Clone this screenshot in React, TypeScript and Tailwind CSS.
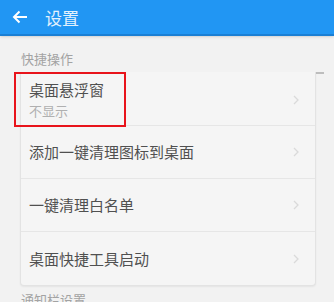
import React from 'react'

const rows = [
  { title: '添加一键清理图标到桌面' },
  { title: '一键清理白名单' },
  { title: '桌面快捷工具启动' },
]

function Chevron() {
  return (
    <svg width="6" height="10" viewBox="0 0 6 10" className="shrink-0">
      <path d="M1 1l4 4-4 4" fill="none" stroke="#dadada" strokeWidth="1.3" />
    </svg>
  )
}

export default function App() {
  return (
    <div
      className="w-[334px] h-[302px] overflow-hidden bg-[#f2f2f2]"
      style={{ fontFamily: '"Noto Sans CJK SC", "Noto Sans", sans-serif' }}
    >
      {/* app bar */}
      <div className="h-[36px] bg-[#2196f3] border-b-2 border-[#1a7fd4] flex items-center shadow-sm">
        <svg width="16" height="14" viewBox="0 0 16 14" className="ml-[12px]">
          <path d="M15 7H2.5M7.5 1.5L2 7l5.5 5.5" fill="none" stroke="#fff" strokeWidth="2" />
        </svg>
        <span className="ml-[17px] text-[17px] leading-none text-[#e3f1fd]">设置</span>
      </div>

      <div className="pl-[21px] pt-[14px] text-[13px] leading-[18px] text-[#a3a3a3]">快捷操作</div>

      <div className="relative ml-[20px] mt-[4px]">
        <div className="h-[2px] w-[304px] bg-[#bdbdbd]" />
        <div className="w-[296px] -mt-[2px] bg-[#f5f5f5] border border-t-0 border-[#e3e3e3] rounded-b-[4px] shadow-[0_1px_2px_rgba(0,0,0,0.06)]">
          <div className="h-[54px] flex items-center justify-between pl-[8px] pr-[16px] border-b border-[#e6e6e6] pt-[2px]">
            <div className="flex flex-col">
              <span className="text-[15px] leading-[20px] text-[#505050]">桌面悬浮窗</span>
              <span className="text-[13px] leading-[17px] mt-[2px] text-[#b0b0b0]">不显示</span>
            </div>
            <Chevron />
          </div>
          {rows.map((r, i) => (
            <div
              key={r.title}
              className={`h-[53px] flex items-center justify-between pl-[8px] pr-[16px] ${
                i < rows.length - 1 ? 'border-b border-[#e6e6e6]' : ''
              }`}
            >
              <span className="text-[15px] leading-[20px] text-[#505050]">{r.title}</span>
              <Chevron />
            </div>
          ))}
        </div>
        {/* highlight annotation */}
        <div className="absolute left-[-6px] top-0 w-[112px] h-[55px] border-2 border-[#e8141b]" />
      </div>

      <div className="pl-[21px] pt-[5px] text-[13px] leading-[18px] text-[#a3a3a3]">通知栏设置</div>
    </div>
  )
}
